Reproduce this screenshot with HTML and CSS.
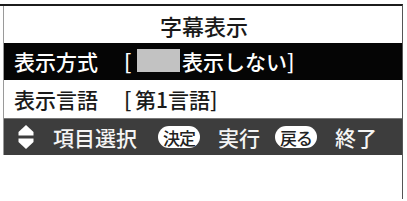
FILE: index.html
```
<!DOCTYPE html>
<html>

<head>
    <title>字幕表示</title>
    <meta charset="utf-8">
    <link rel="stylesheet" href="styles.css">
</head>

<body>
    <div class="ramme">
        <div class="panel">
            <div class="titel">字幕表示</div>
            <div class="linje valgt">
                <span class="navn">表示方式</span>
                <span class="klamme">[</span>
                <span class="farve"></span>
                <span>表示しない]</span>
            </div>
            <div class="linje">
                <span class="navn">表示言語</span>
                <span class="klamme">[</span>
                <span>第1言語]</span>
            </div>
            <div class="hjaelp">
                <svg class="pile" width="16" height="24" viewBox="0 0 16 24">
                    <polygon points="8,0 15.5,7 15.5,10.5 0.5,10.5 0.5,7" fill="#fff" />
                    <polygon points="8,24 15.5,17 15.5,13.5 0.5,13.5 0.5,17" fill="#fff" />
                </svg>
                <span class="tekst">項目選択</span>
                <span class="knap">決定</span>
                <span class="tekst kort">実行</span>
                <span class="knap">戻る</span>
                <span class="tekst">終了</span>
            </div>
        </div>
    </div>
</body>

</html>
```
FILE: styles.css
```
body {
    margin: 0;
    background: #fff;
    font-family: "Noto Sans CJK JP", "Noto Sans", sans-serif;
    font-weight: 500;
}

.ramme {
    width: 402px;
    height: 193px;
    margin-top: 4px;
    border-top: 2px solid #1c1c1c;
    border-right: 1px solid #555;
}

.panel {
    margin-left: 3px;
    border-left: 1px solid #9a9a9a;
}

.titel {
    height: 37px;
    display: flex;
    align-items: center;
    justify-content: center;
    font-size: 22px;
    color: #1a1a1a;
    padding-left: 2px;
}

.linje {
    height: 37px;
    display: flex;
    align-items: center;
    padding-left: 10px;
    font-size: 21px;
    color: #1a1a1a;
    line-height: 1;
}

.linje+.linje {
    height: 38px;
}

.valgt {
    background: #050505;
    color: #fff;
}

.navn {
    width: 110px;
}

.klamme {
    width: 11px;
}

.farve {
    width: 43px;
    height: 23px;
    margin-left: 2px;
    margin-right: 2px;
    margin-top: -3px;
    background: #c2c2c2;
}

.hjaelp {
    height: 37px;
    display: flex;
    align-items: center;
    padding-left: 14px;
    background: #3d3d3d;
    border-top: 1px solid #777;
    box-sizing: border-box;
    color: #f4f4f4;
    font-size: 21px;
    line-height: 1;
}

.pile {
    margin-right: 19px;
}

.tekst {
    margin-right: 21px;
}

.kort {
    margin-right: 15px;
}

.knap {
    height: 22px;
    padding: 0 5px;
    margin-right: 18px;
    border-radius: 11px;
    background: #fff;
    color: #222;
    font-size: 17px;
    letter-spacing: -1px;
    display: flex;
    align-items: center;
}
```
